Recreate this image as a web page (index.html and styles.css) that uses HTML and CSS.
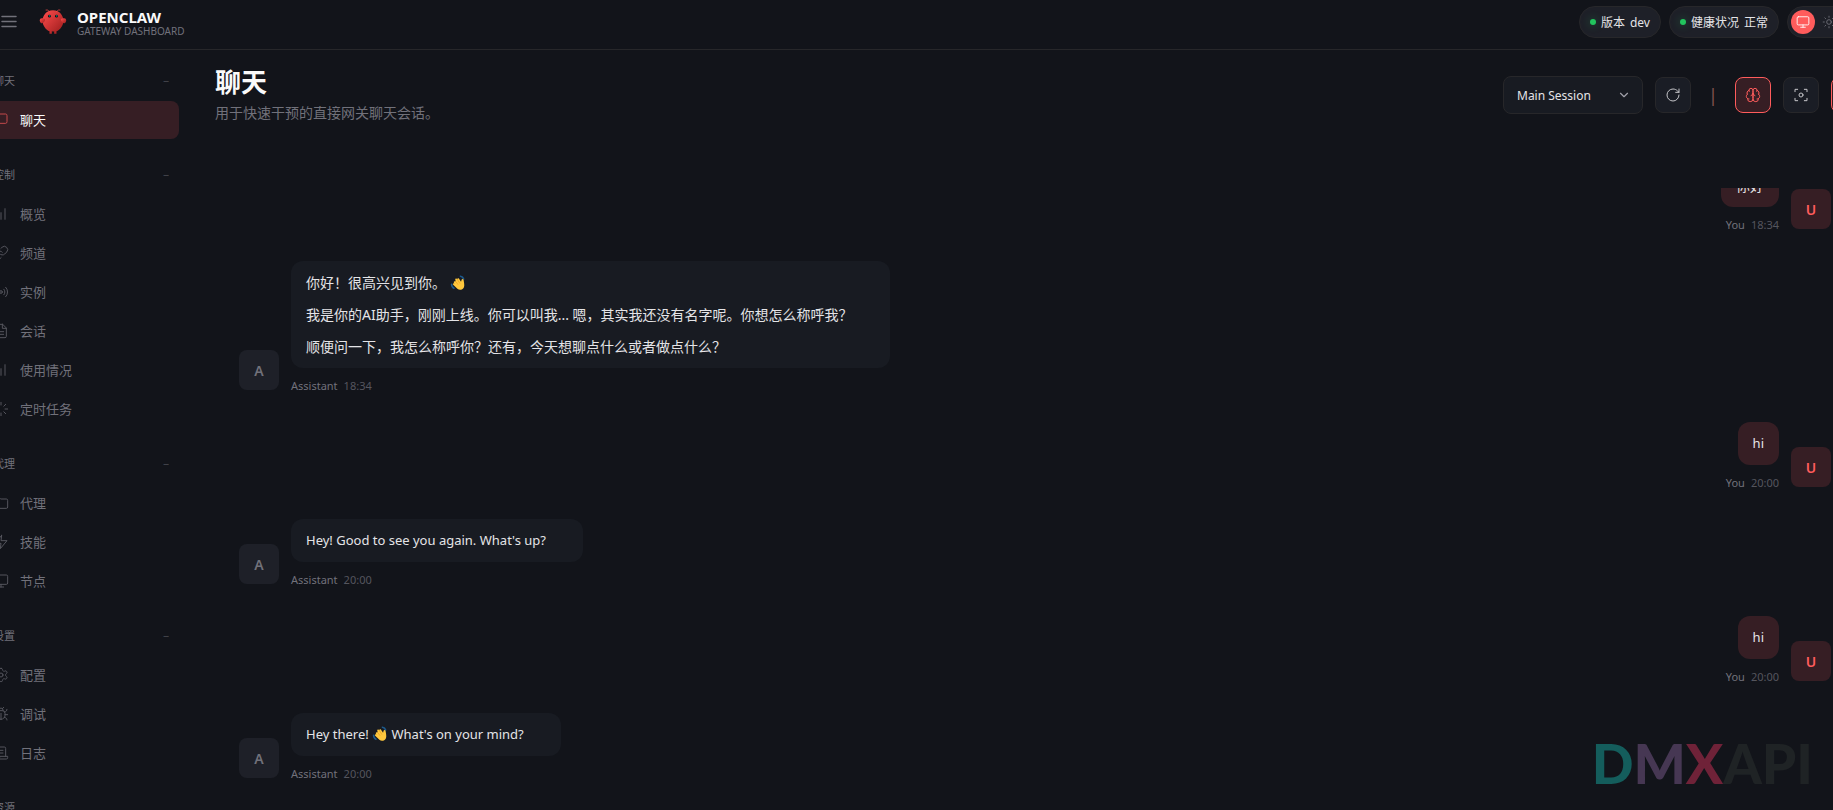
FILE: index.html
```html
<!DOCTYPE html>
<html lang="zh-CN">
<head>
<meta charset="utf-8">
<title>OpenClaw</title>
<link rel="stylesheet" href="styles.css">
</head>
<body>
<div class="app">
  <header class="topbar">
    <button class="menu-button" type="button" aria-label="Menu">
      <svg class="icon icon--menu" viewBox="0 0 18 18"><path d="M2 3.5h14M2 8.5h14M2 13.5h14"/></svg>
    </button>
    <div class="brand">
      <svg class="brand-logo" viewBox="0 0 120 120" aria-hidden="true">
        <defs><linearGradient id="claw" x1="0" y1="0" x2="1" y2="1"><stop offset="0" stop-color="#ff4d4d"/><stop offset="1" stop-color="#991b1b"/></linearGradient></defs>
        <path fill="url(#claw)" d="M60 10C30 10 15 35 15 55C15 75 30 95 45 100L45 110L55 110L55 100C55 100 60 102 65 100L65 110L75 110L75 100C90 95 105 75 105 55C105 35 90 10 60 10Z"/>
        <path fill="url(#claw)" d="M20 45C5 40 0 50 5 60C10 70 20 65 25 55C28 48 25 45 20 45Z"/>
        <path fill="url(#claw)" d="M100 45C115 40 120 50 115 60C110 70 100 65 95 55C92 48 95 45 100 45Z"/>
        <path d="M45 15Q35 5 30 8M75 15Q85 5 90 8" fill="none" stroke="#ff4d4d" stroke-width="3" stroke-linecap="round"/>
        <circle cx="45" cy="35" r="6" fill="#050810"/><circle cx="75" cy="35" r="6" fill="#050810"/>
        <circle cx="46" cy="34" r="2.5" fill="#00e5cc"/><circle cx="76" cy="34" r="2.5" fill="#00e5cc"/>
      </svg>
      <div class="brand-text">
        <div class="brand-title">OPENCLAW</div>
        <div class="brand-sub">GATEWAY DASHBOARD</div>
      </div>
    </div>
    <div class="status">
      <div class="pill"><span class="dot"></span><span>版本</span><span>dev</span></div>
      <div class="pill"><span class="dot"></span><span>健康状况</span><span>正常</span></div>
      <div class="theme">
        <button class="theme-button theme-button--on" type="button" aria-label="System"><svg class="icon icon--small" viewBox="0 0 24 24"><rect x="2" y="3" width="20" height="14" rx="2"/><path d="M8 21h8M12 17v4"/></svg></button>
        <button class="theme-button" type="button" aria-label="Light"><svg class="icon icon--small" viewBox="0 0 24 24"><circle cx="12" cy="12" r="4"/><path d="M12 2v2M12 20v2M4.9 4.9l1.4 1.4M17.7 17.7l1.4 1.4M2 12h2M20 12h2M6.3 17.7l-1.4 1.4M19.1 4.9l-1.4 1.4"/></svg></button>
        <button class="theme-button" type="button" aria-label="Dark"><svg class="icon icon--small" viewBox="0 0 24 24"><path d="M12 3a6 6 0 0 0 9 9 9 9 0 1 1-9-9Z"/></svg></button>
      </div>
    </div>
  </header>

  <div class="body">
    <nav class="nav">
      <section class="nav-group">
        <button class="nav-label" type="button"><span>聊天</span><span class="nav-fold">−</span></button>
        <a class="nav-item nav-item--active" href="#chat"><svg class="icon" viewBox="0 0 24 24"><path d="M21 15a2 2 0 0 1-2 2H7l-4 4V5a2 2 0 0 1 2-2h14a2 2 0 0 1 2 2z"/></svg>聊天</a>
      </section>
      <section class="nav-group">
        <button class="nav-label" type="button"><span>控制</span><span class="nav-fold">−</span></button>
        <a class="nav-item" href="#overview"><svg class="icon" viewBox="0 0 24 24"><path d="M12 20V10M18 20V4M6 20v-4"/></svg>概览</a>
        <a class="nav-item" href="#channels"><svg class="icon" viewBox="0 0 24 24"><path d="M10 13a5 5 0 0 0 7.54.54l3-3a5 5 0 0 0-7.07-7.07l-1.72 1.71"/><path d="M14 11a5 5 0 0 0-7.54-.54l-3 3a5 5 0 0 0 7.07 7.07l1.71-1.71"/></svg>频道</a>
        <a class="nav-item" href="#instances"><svg class="icon" viewBox="0 0 24 24"><circle cx="12" cy="12" r="2"/><path d="M16.24 7.76a6 6 0 0 1 0 8.49M7.76 16.24a6 6 0 0 1 0-8.49M19.07 4.93a10 10 0 0 1 0 14.14M4.93 19.07a10 10 0 0 1 0-14.14"/></svg>实例</a>
        <a class="nav-item" href="#sessions"><svg class="icon" viewBox="0 0 24 24"><path d="M14.5 2H6a2 2 0 0 0-2 2v16a2 2 0 0 0 2 2h12a2 2 0 0 0 2-2V7.5L14.5 2z"/><path d="M14 2v6h6M16 13H8M16 17H8M10 9H8"/></svg>会话</a>
        <a class="nav-item" href="#usage"><svg class="icon" viewBox="0 0 24 24"><path d="M12 20V10M18 20V4M6 20v-4"/></svg>使用情况</a>
        <a class="nav-item" href="#cron"><svg class="icon" viewBox="0 0 24 24"><path d="M12 2v4M16.2 7.8l2.9-2.9M18 12h4M16.2 16.2l2.9 2.9M12 18v4M4.9 19.1l2.9-2.9M2 12h4M4.9 4.9l2.9 2.9"/></svg>定时任务</a>
      </section>
      <section class="nav-group">
        <button class="nav-label" type="button"><span>代理</span><span class="nav-fold">−</span></button>
        <a class="nav-item" href="#agents"><svg class="icon" viewBox="0 0 24 24"><path d="M4 20h16a2 2 0 0 0 2-2V8a2 2 0 0 0-2-2h-7.93a2 2 0 0 1-1.66-.9l-.82-1.2A2 2 0 0 0 7.93 3H4a2 2 0 0 0-2 2v13c0 1.1.9 2 2 2Z"/></svg>代理</a>
        <a class="nav-item" href="#skills"><svg class="icon" viewBox="0 0 24 24"><path d="M13 2L3 14h9l-1 8 10-12h-9l1-8z"/></svg>技能</a>
        <a class="nav-item" href="#nodes"><svg class="icon" viewBox="0 0 24 24"><rect x="2" y="3" width="20" height="14" rx="2"/><path d="M8 21h8M12 17v4"/></svg>节点</a>
      </section>
      <section class="nav-group">
        <button class="nav-label" type="button"><span>设置</span><span class="nav-fold">−</span></button>
        <a class="nav-item" href="#config"><svg class="icon" viewBox="0 0 24 24"><path d="M12.22 2h-.44a2 2 0 0 0-2 2v.18a2 2 0 0 1-1 1.73l-.43.25a2 2 0 0 1-2 0l-.15-.08a2 2 0 0 0-2.73.73l-.22.38a2 2 0 0 0 .73 2.73l.15.1a2 2 0 0 1 1 1.72v.51a2 2 0 0 1-1 1.74l-.15.09a2 2 0 0 0-.73 2.73l.22.38a2 2 0 0 0 2.73.73l.15-.08a2 2 0 0 1 2 0l.43.25a2 2 0 0 1 1 1.73V20a2 2 0 0 0 2 2h.44a2 2 0 0 0 2-2v-.18a2 2 0 0 1 1-1.73l.43-.25a2 2 0 0 1 2 0l.15.08a2 2 0 0 0 2.73-.73l.22-.39a2 2 0 0 0-.73-2.73l-.15-.08a2 2 0 0 1-1-1.74v-.5a2 2 0 0 1 1-1.74l.15-.09a2 2 0 0 0 .73-2.73l-.22-.38a2 2 0 0 0-2.73-.73l-.15.08a2 2 0 0 1-2 0l-.43-.25a2 2 0 0 1-1-1.73V4a2 2 0 0 0-2-2z"/><circle cx="12" cy="12" r="3"/></svg>配置</a>
        <a class="nav-item" href="#debug"><svg class="icon" viewBox="0 0 24 24"><path d="m8 2 1.88 1.88M14.12 3.88 16 2M9 7.13v-1a3 3 0 1 1 6 0v1"/><path d="M12 20c-3.3 0-6-2.7-6-6v-3a4 4 0 0 1 4-4h4a4 4 0 0 1 4 4v3c0 3.3-2.7 6-6 6M12 20v-9M6.53 9C4.6 8.8 3 7.1 3 5M6 13H2M3 21c0-2.1 1.7-3.9 3.8-4M20.97 5c0 2.1-1.6 3.8-3.5 4M22 13h-4M17.2 17c2.1.1 3.8 1.9 3.8 4"/></svg>调试</a>
        <a class="nav-item" href="#logs"><svg class="icon" viewBox="0 0 24 24"><path d="M8 21h12a2 2 0 0 0 2-2v-2H10v2a2 2 0 1 1-4 0V5a2 2 0 1 0-4 0v3h4"/><path d="M19 17V5a2 2 0 0 0-2-2H4M15 8h-5M15 12h-5"/></svg>日志</a>
      </section>
      <section class="nav-group">
        <div class="nav-label">资源</div>
      </section>
    </nav>

    <main class="main">
      <div class="page-head">
        <div>
          <h1 class="page-title">聊天</h1>
          <p class="page-sub">用于快速干预的直接网关聊天会话。</p>
        </div>
        <div class="controls">
          <div class="session">
            <select class="session-select" aria-label="Session"><option>Main Session</option></select>
            <svg class="icon session-arrow" viewBox="0 0 24 24"><path d="m6 9 6 6 6-6"/></svg>
          </div>
          <button class="tool" type="button" aria-label="Refresh"><svg class="icon icon--tool" viewBox="0 0 24 24"><path d="M21 12a9 9 0 1 1-9-9c2.52 0 4.93 1 6.74 2.74L21 8"/><path d="M21 3v5h-5"/></svg></button>
          <span class="separator">|</span>
          <button class="tool tool--on" type="button" aria-label="Thinking"><svg class="icon icon--tool" viewBox="0 0 24 24"><path d="M12 5a3 3 0 1 0-5.997.125 4 4 0 0 0-2.526 5.77 4 4 0 0 0 .556 6.588A4 4 0 1 0 12 18Z"/><path d="M12 5a3 3 0 1 1 5.997.125 4 4 0 0 1 2.526 5.77 4 4 0 0 1-.556 6.588A4 4 0 1 1 12 18Z"/><path d="M15 13a4.5 4.5 0 0 1-3-4 4.5 4.5 0 0 1-3 4M17.599 6.5a3 3 0 0 0 .399-1.375M6.003 5.125A3 3 0 0 0 6.401 6.5M3.477 10.896a4 4 0 0 1 .585-.396M19.938 10.5a4 4 0 0 1 .585.396M6 18a4 4 0 0 1-1.967-.516M19.967 17.484A4 4 0 0 1 18 18"/></svg></button>
          <button class="tool" type="button" aria-label="Focus"><svg class="icon icon--tool" viewBox="0 0 24 24"><path d="M3 7V3.500h4M17 3.500h4V7M21 17v3.500h-4M7 20.500H3V17"/><circle cx="12" cy="12" r="3"/></svg></button>
          <button class="tool tool--on" type="button" aria-label="Scheduled"><svg class="icon icon--tool" viewBox="0 0 24 24"><circle cx="12" cy="12" r="9"/><path d="M12 7v5l3 2"/></svg></button>
        </div>
      </div>

      <div class="thread">
        <article class="message message--user message--cut">
          <div class="avatar">U</div>
          <div class="message-body">
            <div class="bubble"><p>你好</p></div>
            <div class="meta"><span>You</span><time>18:34</time></div>
          </div>
        </article>
        <article class="message">
          <div class="avatar">A</div>
          <div class="message-body">
            <div class="bubble">
              <p>你好！很高兴见到你。 <svg class="wave" viewBox="0 0 20 20" role="img" aria-label="wave"><path d="M13 1.500c2 .3 3.500 1.500 4 3.500M2 11.500c0 2.500 1 4 3 5" fill="none" stroke="#1d5a8c" stroke-width="2" stroke-linecap="round"/><path fill="#ffc83d" d="M5.200 8.200c.7-.8 1.500-.5 2 0L6.600 5.800c-.2-1.300 1.300-2 2-.9l.6.800c-.3-1.500 1.300-2.200 2.100-1.100l2.500 3.800.7-2.500c.4-1.400 2.300-1.200 2.500.2.500 3.500 1.500 6.900.3 9.400-1.400 3-5.400 4-8.100 1.800L4 12.200c-1-1-.1-2.500 1.200-1.900l.5.300-.8-1c-.4-.5-.2-1 .3-1.400Z"/><path fill="none" stroke="#e08f1f" stroke-width=".7" d="m7.200 8.200 3 4M9.200 5.700l3.200 5"/></svg></p>
              <p>我是你的AI助手，刚刚上线。你可以叫我... 嗯，其实我还没有名字呢。你想怎么称呼我？</p>
              <p>顺便问一下，我怎么称呼你？还有，今天想聊点什么或者做点什么？</p>
            </div>
            <div class="meta"><span>Assistant</span><time>18:34</time></div>
          </div>
        </article>
        <article class="message message--user">
          <div class="avatar">U</div>
          <div class="message-body">
            <div class="bubble" lang="en"><p>hi</p></div>
            <div class="meta"><span>You</span><time>20:00</time></div>
          </div>
        </article>
        <article class="message">
          <div class="avatar">A</div>
          <div class="message-body">
            <div class="bubble" lang="en"><p>Hey! Good to see you again. What's up?</p></div>
            <div class="meta"><span>Assistant</span><time>20:00</time></div>
          </div>
        </article>
        <article class="message message--user">
          <div class="avatar">U</div>
          <div class="message-body">
            <div class="bubble" lang="en"><p>hi</p></div>
            <div class="meta"><span>You</span><time>20:00</time></div>
          </div>
        </article>
        <article class="message">
          <div class="avatar">A</div>
          <div class="message-body">
            <div class="bubble" lang="en"><p>Hey there! <svg class="wave" viewBox="0 0 20 20" role="img" aria-label="wave"><path d="M13 1.500c2 .3 3.500 1.500 4 3.500M2 11.500c0 2.500 1 4 3 5" fill="none" stroke="#1d5a8c" stroke-width="2" stroke-linecap="round"/><path fill="#ffc83d" d="M5.200 8.200c.7-.8 1.500-.5 2 0L6.600 5.800c-.2-1.300 1.300-2 2-.9l.6.800c-.3-1.500 1.300-2.200 2.100-1.100l2.500 3.800.7-2.500c.4-1.400 2.300-1.200 2.500.2.500 3.500 1.500 6.900.3 9.400-1.400 3-5.400 4-8.100 1.800L4 12.200c-1-1-.1-2.500 1.200-1.900l.5.300-.8-1c-.4-.5-.2-1 .3-1.400Z"/><path fill="none" stroke="#e08f1f" stroke-width=".7" d="m7.200 8.200 3 4M9.200 5.700l3.200 5"/></svg> What's on your mind?</p></div>
            <div class="meta"><span>Assistant</span><time>20:00</time></div>
          </div>
        </article>
      </div>
    </main>
  </div>
</div>
<div class="watermark" aria-hidden="true"><span class="wm-d">D</span><span class="wm-m">M</span><span class="wm-x">X</span>API</div>
</body>
</html>
```
FILE: styles.css
```css
:root {
  --bg: #12141a;
  --card: #181b22;
  --raised: #1a1d25;
  --secondary: #1e2028;
  --border: #27272a;
  --text: #e4e4e7;
  --strong: #fafafa;
  --muted: #71717a;
  --accent: #ff5c5c;
  --accent-soft: #361e24;
  --ok: #22c55e;
}

* { box-sizing: border-box; }

body {
  margin: 0;
  height: 100vh;
  overflow: hidden;
  position: relative;
  background: var(--bg);
  color: var(--text);
  font: 14px/21px "Noto Sans", "Noto Sans CJK SC", sans-serif;
}

button, select { font: inherit; color: inherit; }
button { padding: 0; border: 0; background: none; cursor: pointer; }
p, h1 { margin: 0; }

/* The shell is wider than the window on both sides. */
.app {
  height: 100vh;
  margin: 0 -58px 0 -19px;
  display: flex;
  flex-direction: column;
}

.icon {
  width: 16px;
  height: 16px;
  flex: none;
  fill: none;
  stroke: currentColor;
  stroke-width: 1.5;
  stroke-linecap: round;
  stroke-linejoin: round;
}
.icon--menu { width: 18px; height: 18px; display: block; }
.icon--small { width: 14px; height: 14px; }
.icon--tool { width: 16px; height: 16px; }

/* Top bar */
.topbar {
  flex: none;
  display: flex;
  align-items: center;
  padding: 6px 20px 11px 19px;
  border-bottom: 1px solid var(--border);
}
.menu-button { color: var(--muted); margin-right: 21px; }
.brand { display: flex; align-items: center; gap: 10px; }
.brand-logo { width: 28px; height: 28px; }
.brand-text { padding-top: 2px; }
.brand-title {
  color: var(--strong);
  font-size: 15px;
  font-weight: 700;
  line-height: 16px;
}
.brand-sub { color: var(--muted); font-size: 10px; line-height: 12px; }
.status { margin-left: auto; display: flex; gap: 8px; }
.pill {
  height: 32px;
  display: flex;
  align-items: center;
  gap: 5px;
  padding: 0 10px;
  border: 1px solid var(--border);
  border-radius: 16px;
  background: var(--secondary);
  font-size: 12px;
}
.dot {
  width: 6px;
  height: 6px;
  border-radius: 50%;
  background: var(--ok);
  box-shadow: 0 0 8px rgba(34, 197, 94, 0.4);
}
.theme {
  display: flex;
  align-items: center;
  gap: 2px;
  padding: 0 3px;
  border: 1px solid var(--border);
  border-radius: 16px;
  background: var(--secondary);
}
.theme-button {
  width: 24px;
  height: 24px;
  display: grid;
  place-items: center;
  border-radius: 50%;
  color: var(--muted);
}
.theme-button--on { background: var(--accent); color: #ffffff; }

/* Navigation */
.body { flex: 1; min-height: 0; display: flex; }
.nav {
  flex: none;
  width: 198px;
  padding-top: 16px;
  overflow: hidden;
}
.nav-group {
  display: flex;
  flex-direction: column;
  gap: 1px;
  margin-bottom: 21px;
}
.nav-label {
  height: 28px;
  margin-bottom: 6px;
  padding: 0 10px 0 12px;
  display: flex;
  align-items: center;
  justify-content: space-between;
  color: var(--muted);
  font-size: 11px;
}
.nav-fold { opacity: 0.6; }
.nav-item {
  height: 38px;
  display: flex;
  align-items: center;
  gap: 11px;
  padding: 0 12px;
  border-radius: 8px;
  color: var(--muted);
  font-size: 13px;
  text-decoration: none;
}
.nav-item .icon { opacity: 0.7; }
.nav-item--active { background: var(--accent-soft); color: var(--strong); }
.nav-item--active .icon { color: var(--accent); }

/* Page */
.main {
  flex: 1;
  min-width: 0;
  display: flex;
  flex-direction: column;
  padding: 16px 24px 0 36px;
}
.page-head {
  flex: none;
  display: flex;
  align-items: flex-start;
  justify-content: space-between;
  padding-bottom: 60px;
}
.page-title {
  color: var(--strong);
  font-size: 26px;
  line-height: 32px;
  font-weight: 700;
}
.page-sub { color: var(--muted); font-size: 14px; line-height: 30px; }
.controls { display: flex; align-items: center; gap: 12px; padding-top: 10px; }
.session { position: relative; }
.session-select {
  appearance: none;
  display: block;
  width: 140px;
  height: 38px;
  padding: 0 32px 0 13px;
  border: 1px solid var(--border);
  border-radius: 8px;
  background: var(--card);
  font-size: 12px;
}
.session-arrow {
  position: absolute;
  right: 12px;
  top: 12px;
  width: 14px;
  height: 14px;
  stroke-width: 2;
  color: #a1a1aa;
  pointer-events: none;
}
.tool {
  width: 36px;
  height: 36px;
  display: grid;
  place-items: center;
  border: 1px solid var(--border);
  border-radius: 8px;
  background: var(--raised);
  color: #c4c4c8;
}
.tool--on {
  border-color: var(--accent);
  background: var(--accent-soft);
  color: var(--accent);
}
.separator { width: 20px; text-align: center; color: #a0625c; font-size: 18px; opacity: 0.8; }

/* Messages */
.thread {
  flex: 1;
  min-height: 0;
  overflow: hidden;
  display: flex;
  flex-direction: column;
  gap: 28px;
  padding: 0 36px 0 24px;
}
.message { flex: none; display: flex; align-items: flex-end; gap: 12px; }
.message--user { flex-direction: row-reverse; }
.message--cut { margin-top: -24px; }
.avatar {
  flex: none;
  width: 40px;
  height: 40px;
  margin-bottom: 4px;
  display: grid;
  place-items: center;
  border-radius: 8px;
  background: var(--secondary);
  color: var(--muted);
  font-weight: 600;
}
.message--user .avatar { background: var(--accent-soft); color: var(--accent); }
.message-body {
  display: flex;
  flex-direction: column;
  align-items: flex-start;
  gap: 10px;
}
.message--user .message-body { align-items: flex-end; }
.bubble {
  display: flex;
  flex-direction: column;
  gap: 11px;
  padding: 11px 37px 11px 15px;
  border-radius: 12px;
  background: var(--card);
}
.bubble:lang(en) { font-size: 13px; }
.message--user .bubble { padding-right: 15px; background: var(--accent-soft); }
.meta {
  display: flex;
  gap: 6px;
  color: var(--muted);
  font-size: 11px;
  line-height: 16px;
}
.meta time { opacity: 0.7; }
.wave { width: 16px; height: 16px; vertical-align: -3px; }

/* Watermark */
.watermark {
  position: absolute;
  right: 20px;
  bottom: 13px;
  color: #1f2325;
  font: 900 55px/68px Lato, sans-serif;
  pointer-events: none;
}
.wm-d { color: #145d5c; }
.wm-m { color: #463753; }
.wm-x { color: #6f2238; }
```
